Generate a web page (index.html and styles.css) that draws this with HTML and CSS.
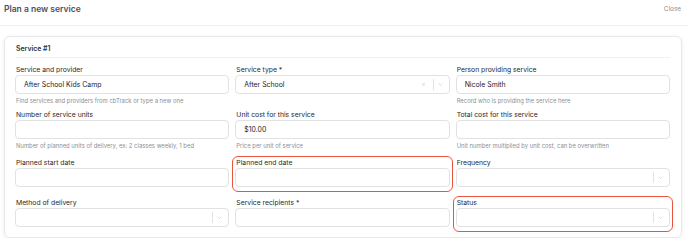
FILE: index.html
```html
<!DOCTYPE html>
<html lang="en">
<head>
    <meta charset="UTF-8">
    <meta name="viewport" content="width=device-width, initial-scale=1.0">
    <title>Plan a new service</title>
    <link rel="stylesheet" href="styles.css">
</head>
<body>

<!-- Top bar -->
<header class="topbar">
    <h1 class="title">Plan a new service</h1>
    <button class="close">Close</button>
</header>

<!-- Service card -->
<section class="card">
    <h2 class="card-title">Service #1</h2>

    <div class="row row-1">
        <div class="field">
            <label class="label">Service and provider</label>
            <div class="input">After School Kids Camp</div>
            <p class="help">Find services and providers from cbTrack or type a new one</p>
        </div>
        <div class="field">
            <label class="label">Service type *</label>
            <div class="input select">
                <span class="value">After School</span>
                <svg class="clear" viewBox="0 0 10 10"><path d="M2 2L8 8M8 2L2 8"/></svg>
                <span class="sep"></span>
                <svg class="chev" viewBox="0 0 10 6"><path d="M1 1L5 5L9 1"/></svg>
            </div>
        </div>
        <div class="field">
            <label class="label">Person providing service</label>
            <div class="input">Nicole Smith</div>
            <p class="help">Record who is providing the service here</p>
        </div>
    </div>

    <div class="row row-2">
        <div class="field">
            <label class="label">Number of service units</label>
            <div class="input"></div>
            <p class="help">Number of planned units of delivery, ex: 2 classes weekly, 1 bed</p>
        </div>
        <div class="field">
            <label class="label">Unit cost for this service</label>
            <div class="input">$10.00</div>
            <p class="help">Price per unit of service</p>
        </div>
        <div class="field">
            <label class="label">Total cost for this service</label>
            <div class="input"></div>
            <p class="help">Unit number multiplied by unit cost, can be overwritten</p>
        </div>
    </div>

    <div class="row row-3">
        <div class="field">
            <label class="label">Planned start date</label>
            <div class="input"></div>
        </div>
        <div class="field flagged">
            <label class="label">Planned end date</label>
            <div class="input"></div>
        </div>
        <div class="field">
            <label class="label">Frequency</label>
            <div class="input select">
                <span class="value"></span>
                <span class="sep"></span>
                <svg class="chev" viewBox="0 0 10 6"><path d="M1 1L5 5L9 1"/></svg>
            </div>
        </div>
    </div>

    <div class="row row-4">
        <div class="field">
            <label class="label">Method of delivery</label>
            <div class="input select">
                <span class="value"></span>
                <span class="sep"></span>
                <svg class="chev" viewBox="0 0 10 6"><path d="M1 1L5 5L9 1"/></svg>
            </div>
        </div>
        <div class="field">
            <label class="label">Service recipients *</label>
            <div class="input"></div>
        </div>
        <div class="field flagged">
            <label class="label">Status</label>
            <div class="input select">
                <span class="value"></span>
                <span class="sep"></span>
                <svg class="chev" viewBox="0 0 10 6"><path d="M1 1L5 5L9 1"/></svg>
            </div>
        </div>
    </div>
</section>

</body>
</html>
```

FILE: styles.css
```css
body {
    font-family: 'Inter', 'Noto Sans', sans-serif;
    margin: 0;
    padding: 0;
    background-color: #fff;
    color: #2e2f33;
}

.topbar {
    display: flex;
    justify-content: space-between;
    align-items: flex-start;
    box-sizing: border-box;
    height: 26px;
    padding: 3px 7px 0 4px;
    border-bottom: 1px solid #f0f0f0;
}

.title {
    margin: 0;
    font-size: 8.5px;
    line-height: 12px;
    font-weight: 600;
    color: #4d5059;
}

.close {
    border: none;
    background: none;
    padding: 0;
    font-family: inherit;
    font-size: 6.4px;
    line-height: 13px;
    color: #8c8c8c;
    cursor: pointer;
}

.card {
    margin: 10px 6px 0 4px;
    padding: 6px 11px 10px 10px;
    border: 1px solid #e8e8e8;
    border-radius: 6px;
    box-shadow: 0 1px 4px rgba(0, 0, 0, 0.07);
}

.card-title {
    margin: 0 0 0 1px;
    padding-bottom: 3px;
    font-size: 6.9px;
    line-height: 11px;
    font-weight: 600;
    color: #2e2f33;
    border-bottom: 1px solid #f0f0f0;
}

.row {
    display: grid;
    grid-template-columns: repeat(3, 1fr);
    column-gap: 6px;
}

.row-1 { margin-top: 7px; }
.row-2 { margin-top: 4px; }
.row-3 { margin-top: 7px; }
.row-4 { margin-top: 11px; }

.field {
    position: relative;
    display: flex;
    flex-direction: column;
}

.label {
    margin-left: 1px;
    font-size: 6.8px;
    line-height: 10px;
    font-weight: 400;
    color: #26272b;
}

.input {
    display: flex;
    align-items: center;
    box-sizing: border-box;
    height: 19px;
    padding: 0 6px 0 8px;
    border: 1px solid #e2e2e2;
    border-radius: 4px;
    background: #fff;
    font-size: 6.9px;
    color: #1f2024;
}

.select .value {
    flex: 1;
}

.clear {
    width: 5px;
    height: 5px;
    margin-right: 7px;
    stroke: #c4c4c4;
    stroke-width: 1.2;
    fill: none;
}

.sep {
    width: 1px;
    height: 11px;
    background: #e2e2e2;
    margin-right: 4px;
}

.chev {
    width: 5px;
    height: 3px;
    stroke: #c4c4c4;
    stroke-width: 1.2;
    fill: none;
}

.help {
    margin: 2px 0 0 1px;
    font-size: 5.9px;
    line-height: 10px;
    color: #8e8f94;
}

/* red review outline drawn over the field */
.flagged::after {
    content: "";
    position: absolute;
    top: -2px;
    left: -3px;
    right: -3px;
    bottom: -5px;
    border: 1.5px solid #e8543e;
    border-radius: 6px;
}
```
